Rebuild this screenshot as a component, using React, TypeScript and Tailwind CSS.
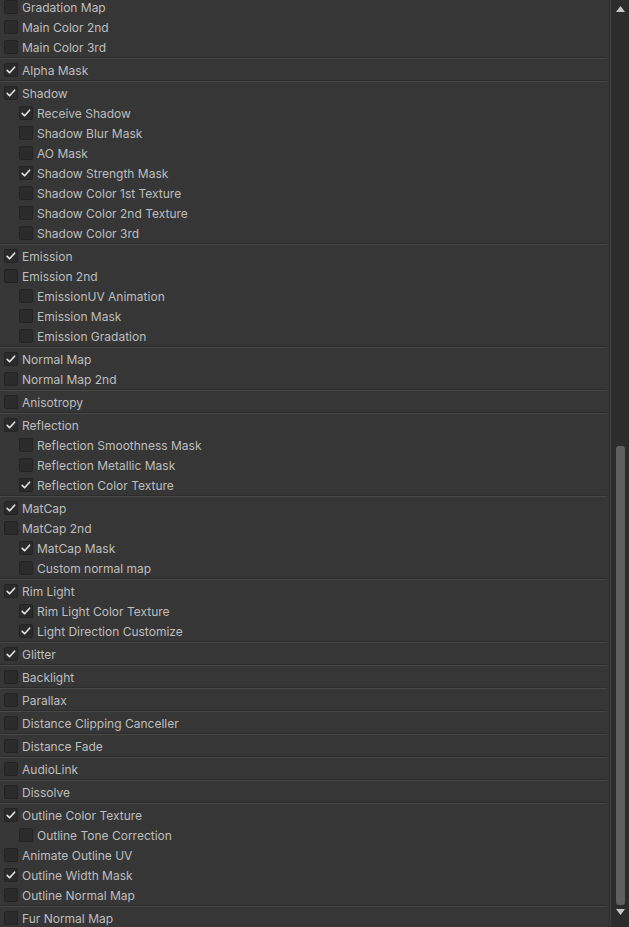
import React from "react";

type Row = { label: string; checked?: boolean; nested?: boolean };

const groups: Row[][] = [
  [
    { label: "Gradation Map" },
    { label: "Main Color 2nd" },
    { label: "Main Color 3rd" },
  ],
  [{ label: "Alpha Mask", checked: true }],
  [
    { label: "Shadow", checked: true },
    { label: "Receive Shadow", checked: true, nested: true },
    { label: "Shadow Blur Mask", nested: true },
    { label: "AO Mask", nested: true },
    { label: "Shadow Strength Mask", checked: true, nested: true },
    { label: "Shadow Color 1st Texture", nested: true },
    { label: "Shadow Color 2nd Texture", nested: true },
    { label: "Shadow Color 3rd", nested: true },
  ],
  [
    { label: "Emission", checked: true },
    { label: "Emission 2nd" },
    { label: "EmissionUV Animation", nested: true },
    { label: "Emission Mask", nested: true },
    { label: "Emission Gradation", nested: true },
  ],
  [{ label: "Normal Map", checked: true }, { label: "Normal Map 2nd" }],
  [{ label: "Anisotropy" }],
  [
    { label: "Reflection", checked: true },
    { label: "Reflection Smoothness Mask", nested: true },
    { label: "Reflection Metallic Mask", nested: true },
    { label: "Reflection Color Texture", checked: true, nested: true },
  ],
  [
    { label: "MatCap", checked: true },
    { label: "MatCap 2nd" },
    { label: "MatCap Mask", checked: true, nested: true },
    { label: "Custom normal map", nested: true },
  ],
  [
    { label: "Rim Light", checked: true },
    { label: "Rim Light Color Texture", checked: true, nested: true },
    { label: "Light Direction Customize", checked: true, nested: true },
  ],
  [{ label: "Glitter", checked: true }],
  [{ label: "Backlight" }],
  [{ label: "Parallax" }],
  [{ label: "Distance Clipping Canceller" }],
  [{ label: "Distance Fade" }],
  [{ label: "AudioLink" }],
  [{ label: "Dissolve" }],
  [
    { label: "Outline Color Texture", checked: true },
    { label: "Outline Tone Correction", nested: true },
    { label: "Animate Outline UV" },
    { label: "Outline Width Mask", checked: true },
    { label: "Outline Normal Map" },
  ],
  [{ label: "Fur Normal Map" }],
];

function Checkbox({ checked }: { checked?: boolean }) {
  return (
    <span className="flex h-[14px] w-[14px] shrink-0 items-center justify-center rounded-[2px] border border-[#232323] bg-[#2b2b2b]">
      {checked && (
        <svg width="12" height="12" viewBox="0 0 12 12" fill="none">
          <path
            d="M2.2 6.4 L4.6 8.8 L9.6 3.2"
            stroke="#e4e4e4"
            strokeWidth="1.6"
            strokeLinecap="round"
            strokeLinejoin="round"
          />
        </svg>
      )}
    </span>
  );
}

function ToggleRow({ row }: { row: Row }) {
  return (
    <div
      className={`flex h-5 items-center gap-[4px] ${row.nested ? "pl-[19px]" : "pl-[4px]"}`}
    >
      <Checkbox checked={row.checked} />
      <span className="whitespace-nowrap pt-[2px] text-[12px] leading-none text-[#bebebe]">
        {row.label}
      </span>
    </div>
  );
}

export default function App() {
  return (
    <div
      className="flex h-[927px] w-[629px] overflow-hidden bg-[#363636]"
      style={{ fontFamily: "Inter, 'Noto Sans', sans-serif" }}
    >
      <div className="w-[609px] shrink-0 overflow-hidden">
        <div className="mt-[-3px] flex flex-col pr-[2px]">
          {groups.map((group, gi) => (
            <div key={gi} className="flex flex-col">
              {gi > 0 && (
                <div className="flex h-[3px] flex-col">
                  <div className="h-px bg-[#2c2c2c]" />
                  <div className="h-px bg-[#474747]" />
                  <div className="h-px" />
                </div>
              )}
              {group.map((row) => (
                <ToggleRow key={row.label} row={row} />
              ))}
            </div>
          ))}
        </div>
      </div>
      <div className="w-[3px] shrink-0 border-x border-[#2f2f2f] bg-[#3d3d3d]" />
      <div className="flex w-[17px] shrink-0 flex-col items-center bg-[#2c2c2c]">
        <div className="flex h-[12px] items-end justify-center">
          <svg width="9" height="6" viewBox="0 0 9 6">
            <path d="M4.5 0 L9 6 L0 6 Z" fill="#c6c6c6" />
          </svg>
        </div>
        <div className="flex flex-1 flex-col items-center">
          <div className="mt-[434px] h-[459px] w-[9px] rounded-[3px] bg-[#5f5f5f]" />
        </div>
        <div className="flex h-[20px] items-start justify-center pt-[2px]">
          <svg width="9" height="6" viewBox="0 0 9 6">
            <path d="M0 0 L9 0 L4.5 6 Z" fill="#c6c6c6" />
          </svg>
        </div>
      </div>
    </div>
  );
}
